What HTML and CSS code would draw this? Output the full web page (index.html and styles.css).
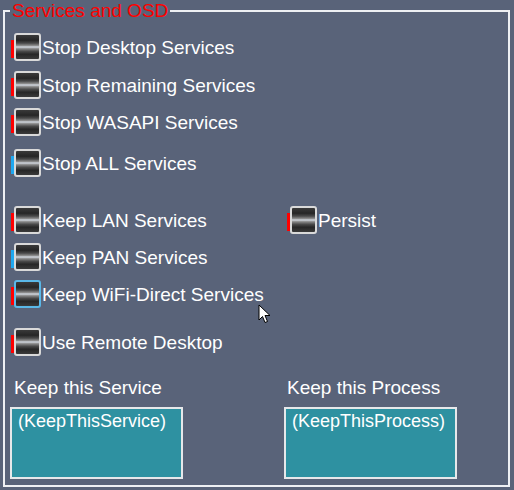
FILE: index.html
```html
<!DOCTYPE html>
<html>
<head>
    <title>Services and OSD</title>
    <link rel="stylesheet" href="styles.css">
</head>
<body>
    <fieldset class="panel">
        <legend class="panel-title">Services and OSD</legend>

        <div class="opts">
            <div class="opt first"><span class="check red"></span>Stop Desktop Services</div>
            <div class="opt sp10"><span class="check red"></span>Stop Remaining Services</div>
            <div class="opt sp9"><span class="check red"></span>Stop WASAPI Services</div>
            <div class="opt sp13"><span class="check blue"></span>Stop ALL Services</div>

            <div class="opt-pair sp29">
                <div class="opt"><span class="check red"></span>Keep LAN Services</div>
                <div class="opt"><span class="check red"></span>Persist</div>
            </div>
            <div class="opt sp9"><span class="check blue"></span>Keep PAN Services</div>
            <div class="opt sp9"><span class="check red focus"></span>Keep WiFi-Direct Services</div>
            <div class="opt sp20"><span class="check red"></span>Use Remote Desktop</div>
        </div>

        <div class="fields">
            <div class="field">
                <div class="field-label">Keep this Service</div>
                <div class="field-box">(KeepThisService)</div>
            </div>
            <div class="field">
                <div class="field-label right">Keep this Process</div>
                <div class="field-box">(KeepThisProcess)</div>
            </div>
        </div>
    </fieldset>

    <svg class="cursor" width="14" height="20" viewBox="0 0 14 20">
        <path d="M1 1 L1 16 L4.5 12.5 L7 18.5 L9.5 17.5 L7 11.5 L12 11.5 Z" fill="#fff" stroke="#000" stroke-width="1"/>
    </svg>
</body>
</html>
```

FILE: styles.css
```css
body {
    margin: 0;
    background-color: #596379;
    font-family: "Liberation Sans", Arial, sans-serif;
    font-size: 19px;
    color: #fff;
    position: relative;
    height: 490px;
    overflow: hidden;
}

.panel {
    box-sizing: border-box;
    margin: 0 4px 0 3px;
    padding: 0;
    min-width: 0;
    height: 487px;
    border: 2px solid #eef0f3;
}

.panel-title {
    margin-left: 5px;
    padding: 0 2px;
    line-height: 22px;
    color: #ff0000;
}

.opts {
    padding-left: 9px;
}

.opt {
    display: flex;
    align-items: center;
    height: 28px;
    line-height: 22px;
    padding-top: 2px;
    box-sizing: border-box;
    white-space: nowrap;
}

.first { margin-top: 11px; }
.sp9 { margin-top: 9px; }
.sp10 { margin-top: 10px; }
.sp13 { margin-top: 13px; }
.sp20 { margin-top: 20px; }
.sp29 { margin-top: 29px; }

.opt-pair {
    display: grid;
    grid-template-columns: 276px auto;
}

.check {
    position: relative;
    box-sizing: border-box;
    width: 27px;
    height: 28px;
    margin-top: -2px;
    margin-right: 1px;
    border: 2px solid #d9d9d9;
    border-radius: 3px;
    background: linear-gradient(#3a3a3a 0%, #262626 22%, #4a4a4a 34%, #8c8c8c 44%, #d4dae2 50%, #8a8a8a 57%, #4a4a4a 68%, #262626 80%, #3a3a3a 100%);
    flex-shrink: 0;
}

.check::before {
    content: "";
    position: absolute;
    left: -5px;
    top: 5px;
    width: 3px;
    height: 18px;
}

.check.red::before {
    background-color: #ff0000;
}

.check.blue::before {
    background-color: #1ea8f0;
}

.check.focus {
    border-color: #5ab8e8;
}

.fields {
    display: grid;
    grid-template-columns: 173px 173px;
    column-gap: 101px;
    margin-top: 21px;
    margin-left: 5px;
}

.field-label {
    line-height: 22px;
    padding-left: 4px;
}

.field-label.right {
    padding-left: 3px;
}

.field-box {
    box-sizing: border-box;
    height: 72px;
    margin-top: 8px;
    padding: 1px 6px 0;
    border: 2px solid #e6e8ea;
    background-color: #2e91a1;
    font-size: 18px;
    line-height: 22px;
}

.cursor {
    position: absolute;
    left: 258px;
    top: 304px;
}
```
